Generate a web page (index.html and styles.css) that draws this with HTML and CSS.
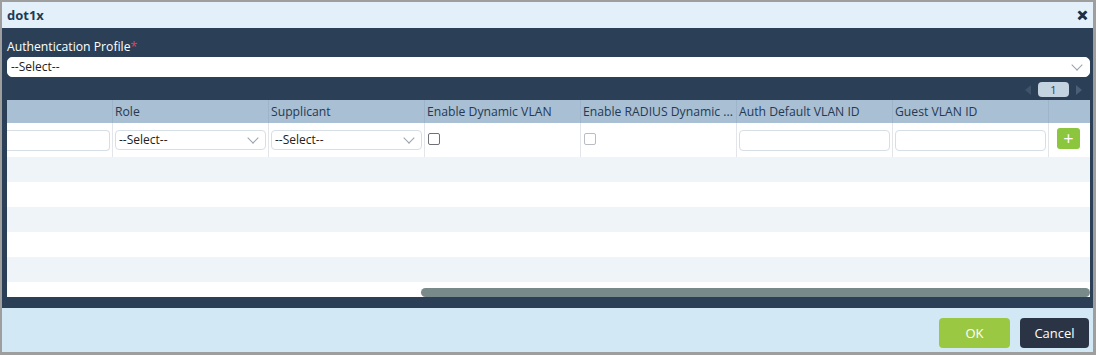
FILE: index.html
```html
<!DOCTYPE html>
<html lang="en">
<head>
    <meta charset="UTF-8">
    <meta name="viewport" content="width=device-width, initial-scale=1.0">
    <title>dot1x</title>
    <link rel="stylesheet" href="styles.css">
</head>
<body>
    <div class="dialog">
        <div class="titlebar">
            <span class="title">dot1x</span>
            <span class="close">&#x2715;</span>
        </div>
        <div class="main">
            <label class="field-label">Authentication Profile<span class="req">*</span></label>
            <div class="select wide">--Select--<span class="chev"></span></div>
            <div class="pager">
                <span class="arrow left"></span>
                <span class="page">1</span>
                <span class="arrow right"></span>
            </div>
            <div class="grid-wrap">
                <div class="row head">
                    <div class="cell"></div>
                    <div class="cell">Role</div>
                    <div class="cell">Supplicant</div>
                    <div class="cell">Enable Dynamic VLAN</div>
                    <div class="cell">Enable RADIUS Dynamic ...</div>
                    <div class="cell">Auth Default VLAN ID</div>
                    <div class="cell">Guest VLAN ID</div>
                    <div class="cell"></div>
                </div>
                <div class="row edit">
                    <div class="cell"><div class="input cut"></div></div>
                    <div class="cell"><div class="select">--Select--<span class="chev"></span></div></div>
                    <div class="cell"><div class="select">--Select--<span class="chev"></span></div></div>
                    <div class="cell"><span class="check"></span></div>
                    <div class="cell"><span class="check off"></span></div>
                    <div class="cell"><div class="input"></div></div>
                    <div class="cell"><div class="input"></div></div>
                    <div class="cell"><span class="add">+</span></div>
                </div>
                <div class="row alt"></div>
                <div class="row"></div>
                <div class="row alt"></div>
                <div class="row"></div>
                <div class="row alt"></div>
                <div class="row"></div>
                <div class="scrollbar"></div>
            </div>
        </div>
        <div class="footer">
            <button class="btn ok">OK</button>
            <button class="btn cancel">Cancel</button>
        </div>
    </div>
</body>
</html>
```

FILE: styles.css
```css
body {
    margin: 0;
    background-color: #9e9e9e;
    font-family: "Open Sans", Arial, sans-serif;
    font-size: 12px;
}
.dialog {
    margin: 2px 3px 3px 2px;
    height: 350px;
    display: flex;
    flex-direction: column;
}
.titlebar {
    height: 26px;
    background-color: #e3eff9;
    display: flex;
    align-items: center;
    justify-content: space-between;
    padding: 0 5px 0 5px;
}
.title {
    font-weight: bold;
    font-size: 13px;
    color: #1e3a55;
}
.close {
    font-weight: bold;
    font-size: 13px;
    color: #1e2f44;
    -webkit-text-stroke: 1px #1e2f44;
}
.main {
    height: 280px;
    box-sizing: border-box;
    background-color: #2b3f56;
    padding: 11px 3px 0 5px;
}
.field-label {
    display: block;
    height: 18px;
    line-height: 16px;
    font-size: 12.2px;
    color: #ffffff;
}
.req {
    color: #e2415a;
}
.select {
    position: relative;
    height: 20px;
    box-sizing: border-box;
    background-color: #fff;
    border: 1px solid #d6dee6;
    border-radius: 4px;
    padding-left: 3px;
    line-height: 18px;
    color: #222;
}
.select.wide {
    border-color: #fff;
    border-radius: 5px;
}
.chev {
    position: absolute;
    right: 8px;
    top: 3px;
    width: 7px;
    height: 7px;
    border-right: 1px solid #9aa3ad;
    border-bottom: 1px solid #9aa3ad;
    transform: rotate(45deg);
}
.pager {
    height: 15px;
    margin: 5px 0 3px;
    display: flex;
    justify-content: flex-end;
    align-items: center;
    gap: 7px;
    padding-right: 8px;
}
.page {
    width: 31px;
    height: 15px;
    border-radius: 4px;
    background-color: #c4d3e0;
    color: #2b3f56;
    font-size: 11px;
    line-height: 15px;
    text-align: center;
}
.arrow {
    width: 0;
    height: 0;
    border-top: 5px solid transparent;
    border-bottom: 5px solid transparent;
}
.arrow.left {
    border-right: 6px solid #3f536a;
}
.arrow.right {
    border-left: 6px solid #4b5f75;
}
.grid-wrap {
    position: relative;
    height: 197px;
    background-color: #fff;
    overflow: hidden;
}
.row {
    display: grid;
    grid-template-columns: 105px 156px 156px 156px 156px 156px 156px 42px;
    height: 25px;
}
.row.alt {
    background-color: #eff4f8;
}
.row.head {
    height: 23px;
    background-color: #a9bfd4;
    color: #253a52;
}
.head .cell {
    line-height: 23px;
    padding-left: 2px;
    border-left: 1px solid #9db4ca;
    font-size: 12.2px;
    white-space: nowrap;
    overflow: hidden;
}
.head .cell:first-child {
    border-left: none;
}
.row.edit {
    height: 34px;
}
.edit .cell {
    border-left: 1px solid #e2e6ea;
    padding: 7px 2px 0 2px;
}
.edit .cell:first-child {
    border-left: none;
    padding-left: 0;
}
.input {
    height: 21px;
    box-sizing: border-box;
    border: 1px solid #d6dee6;
    border-radius: 4px;
}
.input.cut {
    border-left: none;
    border-radius: 0 4px 4px 0;
}
.check {
    display: block;
    width: 12px;
    height: 12px;
    margin: 3px 0 0 1px;
    border: 1px solid #6e7078;
    border-radius: 2px;
    box-sizing: border-box;
}
.check.off {
    border-color: #b9bcc2;
}
.add {
    display: block;
    width: 23px;
    height: 21px;
    margin: -2px 0 0 6px;
    border-radius: 3px;
    background-color: #8cc63f;
    color: #fff;
    font-size: 18px;
    line-height: 20px;
    text-align: center;
}
.scrollbar {
    position: absolute;
    left: 414px;
    right: 0;
    bottom: 0;
    height: 9px;
    border-radius: 5px;
    background-color: #788a8a;
}
.footer {
    flex: 1;
    background-color: #d3e8f5;
    display: flex;
    justify-content: flex-end;
    gap: 10px;
    padding: 10px 4px 0 0;
}
.btn {
    height: 30px;
    border: none;
    border-radius: 4px;
    color: #fff;
    font-family: "Open Sans", Arial, sans-serif;
    font-size: 13px;
    cursor: pointer;
}
.ok {
    width: 71px;
    background-color: #9bc843;
}
.cancel {
    width: 69px;
    background-color: #2b3444;
}
```
